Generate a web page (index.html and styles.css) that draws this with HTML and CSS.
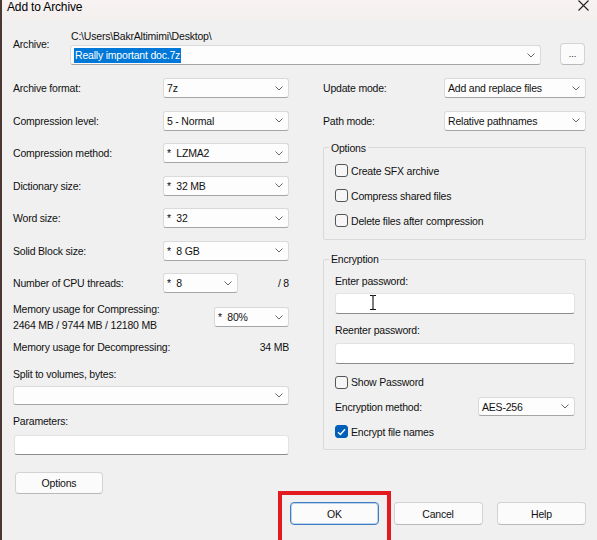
FILE: index.html
```html
<!DOCTYPE html>
<html>
<head>
<meta charset="utf-8">
<title>Add to Archive</title>
<link rel="stylesheet" href="styles.css">
</head>
<body>
<div class="window">
  <div class="titlebar">
    <span class="title">Add to Archive</span>
    <svg class="close" width="11" height="11" viewBox="0 0 11 11"><path d="M0.5 0.5 L10.5 10.5 M10.5 0.5 L0.5 10.5" stroke="#222" stroke-width="1.1" fill="none"/></svg>
  </div>
  <div class="content">
    <div class="archive">
      <div class="archive-label">Archive:</div>
      <div class="archive-main">
        <div class="path">C:\Users\BakrAltimimi\Desktop\</div>
        <div class="combo archive-combo"><span class="sel">Really important doc.7z</span><svg class="chev" width="8" height="5" viewBox="0 0 8 5"><path d="M0.5 0.5 L4 4 L7.5 0.5" stroke="#666" fill="none"/></svg></div>
      </div>
      <div class="btn dots">...</div>
    </div>

    <div class="columns">
      <div class="left">
        <div class="row"><span class="lbl">Archive format:</span><div class="combo w-std"><span>7z</span><svg class="chev" width="8" height="5" viewBox="0 0 8 5"><path d="M0.5 0.5 L4 4 L7.5 0.5" stroke="#666" fill="none"/></svg></div></div>
        <div class="row"><span class="lbl">Compression level:</span><div class="combo w-std"><span>5 - Normal</span><svg class="chev" width="8" height="5" viewBox="0 0 8 5"><path d="M0.5 0.5 L4 4 L7.5 0.5" stroke="#666" fill="none"/></svg></div></div>
        <div class="row"><span class="lbl">Compression method:</span><div class="combo w-std"><span class="pre">*  LZMA2</span><svg class="chev" width="8" height="5" viewBox="0 0 8 5"><path d="M0.5 0.5 L4 4 L7.5 0.5" stroke="#666" fill="none"/></svg></div></div>
        <div class="row"><span class="lbl">Dictionary size:</span><div class="combo w-std"><span class="pre">*  32 MB</span><svg class="chev" width="8" height="5" viewBox="0 0 8 5"><path d="M0.5 0.5 L4 4 L7.5 0.5" stroke="#666" fill="none"/></svg></div></div>
        <div class="row"><span class="lbl">Word size:</span><div class="combo w-std"><span class="pre">*  32</span><svg class="chev" width="8" height="5" viewBox="0 0 8 5"><path d="M0.5 0.5 L4 4 L7.5 0.5" stroke="#666" fill="none"/></svg></div></div>
        <div class="row"><span class="lbl">Solid Block size:</span><div class="combo w-std"><span class="pre">*  8 GB</span><svg class="chev" width="8" height="5" viewBox="0 0 8 5"><path d="M0.5 0.5 L4 4 L7.5 0.5" stroke="#666" fill="none"/></svg></div></div>
        <div class="row row-cpu"><span class="lbl lbl-cpu">Number of CPU threads:</span><div class="combo w-small"><span class="pre">*  8</span><svg class="chev" width="8" height="5" viewBox="0 0 8 5"><path d="M0.5 0.5 L4 4 L7.5 0.5" stroke="#666" fill="none"/></svg></div><span class="val">/ 8</span></div>
        <div class="row-mem">
          <div class="lbl mem-lbl">Memory usage for Compressing:<br>2464 MB / 9744 MB / 12180 MB</div>
          <div class="combo w-small"><span class="pre">*  80%</span><svg class="chev" width="8" height="5" viewBox="0 0 8 5"><path d="M0.5 0.5 L4 4 L7.5 0.5" stroke="#666" fill="none"/></svg></div>
        </div>
        <div class="row-decomp"><span class="lbl">Memory usage for Decompressing:</span><span class="val">34 MB</span></div>
        <div class="line split-lbl">Split to volumes, bytes:</div>
        <div class="combo w-full split"><span></span><svg class="chev" width="8" height="5" viewBox="0 0 8 5"><path d="M0.5 0.5 L4 4 L7.5 0.5" stroke="#666" fill="none"/></svg></div>
        <div class="line params-lbl">Parameters:</div>
        <div class="textbox params"></div>
        <div class="btn options">Options</div>
      </div>

      <div class="right">
        <div class="row"><span class="lbl">Update mode:</span><div class="combo w-wide"><span>Add and replace files</span><svg class="chev" width="8" height="5" viewBox="0 0 8 5"><path d="M0.5 0.5 L4 4 L7.5 0.5" stroke="#666" fill="none"/></svg></div></div>
        <div class="row row-path"><span class="lbl">Path mode:</span><div class="combo w-wide"><span>Relative pathnames</span><svg class="chev" width="8" height="5" viewBox="0 0 8 5"><path d="M0.5 0.5 L4 4 L7.5 0.5" stroke="#666" fill="none"/></svg></div></div>

        <fieldset class="group group-options">
          <legend>Options</legend>
          <div class="check"><span class="box"></span><span>Create SFX archive</span></div>
          <div class="check"><span class="box"></span><span>Compress shared files</span></div>
          <div class="check"><span class="box"></span><span>Delete files after compression</span></div>
        </fieldset>

        <fieldset class="group group-enc">
          <legend>Encryption</legend>
          <div class="line">Enter password:</div>
          <div class="textbox pw pw1">
            <svg class="ibeam" width="8" height="17" viewBox="0 0 8 17"><path d="M1 1.5 H3.2 Q4 1.5 4 2.5 Q4 1.5 4.8 1.5 H7 M4 2.5 V14.5 M1 15.5 H3.2 Q4 15.5 4 14.5 Q4 15.5 4.8 15.5 H7" stroke="#fff" stroke-width="2.6" fill="none"/><path d="M1 1.5 H3.2 Q4 1.5 4 2.5 Q4 1.5 4.8 1.5 H7 M4 2.5 V14.5 M1 15.5 H3.2 Q4 15.5 4 14.5 Q4 15.5 4.8 15.5 H7" stroke="#111" stroke-width="1.1" fill="none"/></svg>
          </div>
          <div class="line re-lbl">Reenter password:</div>
          <div class="textbox pw pw2"></div>
          <div class="check show-pw"><span class="box"></span><span>Show Password</span></div>
          <div class="row-enc"><span class="lbl">Encryption method:</span><div class="combo w-enc"><span>AES-256</span><svg class="chev" width="8" height="5" viewBox="0 0 8 5"><path d="M0.5 0.5 L4 4 L7.5 0.5" stroke="#666" fill="none"/></svg></div></div>
          <div class="check"><span class="box checked"><svg width="9" height="8" viewBox="0 0 9 8"><path d="M1 4.2 L3.4 6.5 L8 1.2" stroke="#fff" stroke-width="1.3" fill="none"/></svg></span><span>Encrypt file names</span></div>
        </fieldset>
      </div>
    </div>

    <div class="footer">
      <div class="ok-wrap">
        <div class="btn ok">OK</div>
        <div class="highlight"></div>
      </div>
      <div class="btn">Cancel</div>
      <div class="btn">Help</div>
    </div>
  </div>
</div>
</body>
</html>
```

FILE: styles.css
```css
* { box-sizing: border-box; }
html, body { margin: 0; padding: 0; }
body {
  width: 597px;
  height: 540px;
  overflow: hidden;
  background: #f0f0f0;
  font-family: "Liberation Sans", Arial, sans-serif;
  font-size: 10.5px;
  letter-spacing: -0.2px;
  line-height: 14px;
  color: #111;
}
.window {
  height: 540px;
  border-left: 2px solid #4d3734;
  background: #f0f0f0;
}
.titlebar {
  height: 20px;
  background: linear-gradient(#f8f2f2, #f4f0f0);
  display: flex;
  justify-content: space-between;
  align-items: flex-start;
  padding: 0 8px 0 5px;
  font-size: 12px;
  letter-spacing: -0.15px;
  line-height: 14px;
  color: #000;
}
.title { padding-top: 0; }
.content { padding: 0 11px; }

/* buttons */
.btn {
  height: 23px;
  width: 89px;
  flex: none;
  background: #fbfbfb;
  border: 1px solid #d3d3d3;
  border-bottom-color: #b9b9b9;
  border-radius: 4px;
  display: flex;
  align-items: center;
  justify-content: center;
  color: #111;
}

/* archive */
.archive { display: flex; margin-top: 9px; align-items: flex-end; }
.archive-label { width: 57px; flex: none; align-self: flex-start; padding-top: 8px; }
.archive-main { width: 471px; flex: none; }
.path { padding-left: 1px; }
.archive-combo { height: 21px; margin-top: 2px; border: 1px solid #0078d4; border-radius: 2px; padding-left: 2px; }
.sel { background: #0078d7; color: #fff; padding: 0 1px; line-height: 15px; }
.btn.dots { width: 25px; height: 22px; margin-left: 19px; font-size: 9px; line-height: 12px; letter-spacing: 0; padding-bottom: 1px; }

/* combos */
.combo {
  height: 20px;
  flex: none;
  background: #fdfdfd;
  border: 1px solid #dadada;
  border-bottom-color: #a5a5a5;
  border-radius: 3px;
  display: flex;
  align-items: center;
  justify-content: space-between;
  padding: 0 5px 0 3px;
  white-space: pre;
}
.chev { flex: none; }
.pre { white-space: pre; }
.w-std { width: 126px; }
.w-small { width: 75px; }
.w-wide { width: 142px; }
.w-full { width: 276px; }
.w-enc { width: 97px; height: 19px; }

/* left column rows */
.columns { display: flex; gap: 34px; margin-top: 13px; }
.left { width: 276px; display: flex; flex-direction: column; }
.right { width: 263px; display: flex; flex-direction: column; }
.row { display: flex; align-items: center; height: 20px; margin-bottom: 12.5px; }
.lbl { flex: 1; }
.row-cpu { margin-bottom: 8px; }
.val { text-align: right; }
.row-cpu .val { flex: 1; }
.lbl-cpu { flex: none; width: 150px; }
.row-mem { display: flex; align-items: center; height: 32px; }
.mem-lbl { line-height: 16px; }
.row-decomp { display: flex; margin-top: 7px; height: 14px; }
.split-lbl { margin-top: 13px; }
.split { margin-top: 5px; height: 19px; }
.params-lbl { margin-top: 9px; }
.params { margin-top: 7px; height: 20px; width: 275px; margin-left: 1px; }

.textbox {
  background: #fff;
  border: 1px solid #e3e3e3;
  border-bottom: 1px solid #8c8c8c;
  border-radius: 3px;
}

.btn.options { width: 88px; height: 22px; margin-top: 17px; margin-left: 2px; }

/* right column */
.row-path { margin-bottom: 0; }
.group {
  margin: 0;
  border: 1px solid #d9d9d9;
  border-radius: 2px;
  min-width: 0;
}
.group legend { padding: 0 2px; margin-left: -6px; line-height: 14px; }
.group-options { margin-top: 10px; padding: 3.5px 11px 6px 11px; }
.group-enc { margin-top: 12px; padding: 8px 10px 5px 11px; }
.check { display: flex; align-items: center; height: 25px; gap: 3px; }
.box {
  width: 13px;
  height: 13px;
  flex: none;
  border: 1px solid #555;
  border-radius: 3px;
  background: #f6f6f6;
  display: flex;
  align-items: center;
  justify-content: center;
}
.box.checked { background: #005fb8; border-color: #005fb8; }
.pw { height: 21px; width: 240px; margin-top: 5px; position: relative; }
.re-lbl { margin-top: 9px; }
.pw2 { margin-top: 6px; }
.show-pw { margin-top: 5.5px; }
.row-enc { display: flex; align-items: center; height: 24.5px; }
.ibeam { position: absolute; left: 33px; top: 0px; }

/* footer */
.footer { display: flex; justify-content: flex-end; gap: 14.5px; margin-top: 8px; }
.ok-wrap { position: relative; }
.btn.ok { border: 1px solid #3f7cc2; box-shadow: inset 0 0 0 1px #bcd3ec; }
.highlight {
  position: absolute;
  left: -12px;
  top: -11px;
  width: 113px;
  height: 60px;
  border: 4px solid #e31a1f;
}
```
